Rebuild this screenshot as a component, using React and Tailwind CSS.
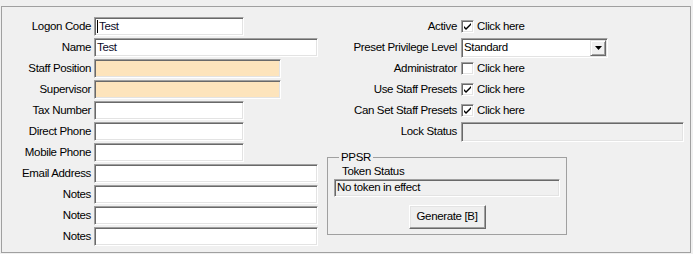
import React from "react";

const sunken =
  "border border-t-[#a0a0a0] border-l-[#a0a0a0] border-b-white border-r-white shadow-[inset_1px_1px_0_#696969,inset_-1px_-1px_0_#e3e3e3]";

const leftRows = [
  { label: "Logon Code", w: "w-[150px]", value: "Test", caret: true },
  { label: "Name", w: "w-[224px]", value: "Test" },
  { label: "Staff Position", w: "w-[187px]", peach: true },
  { label: "Supervisor", w: "w-[187px]", peach: true },
  { label: "Tax Number", w: "w-[150px]" },
  { label: "Direct Phone", w: "w-[150px]" },
  { label: "Mobile Phone", w: "w-[150px]" },
  { label: "Email Address", w: "w-[224px]" },
  { label: "Notes", w: "w-[224px]" },
  { label: "Notes", w: "w-[224px]" },
  { label: "Notes", w: "w-[224px]" },
];

const Check = ({ checked }) => (
  <div className={`w-[13px] h-[13px] bg-white flex items-center justify-center ${sunken}`}>
    {checked && (
      <svg width="9" height="9" viewBox="0 0 9 9">
        <path d="M1 4 L3 6 L8 1 L8 3 L3 8 L1 6 Z" fill="#000" />
      </svg>
    )}
  </div>
);

const RightRow = ({ label, children }) => (
  <div className="h-[21px] flex items-center">
    <div className="w-[137px] text-right whitespace-nowrap">{label}</div>
    <div className="ml-[4px] flex items-center">{children}</div>
  </div>
);

const CheckRow = ({ label, checked }) => (
  <RightRow label={label}>
    <Check checked={checked} />
    <span className="ml-[3px]">Click here</span>
  </RightRow>
);

export default function App() {
  return (
    <div
      className="w-[693px] h-[254px] bg-[#f0f0f0] pt-[6px] pl-[1px] text-[11.5px] tracking-[-0.35px] text-black"
      style={{ fontFamily: '"Liberation Sans", Arial, sans-serif' }}
    >
      <div className="w-[690px] h-[247px] border border-[#a0a0a0] pt-[9px] flex">
        <div className="flex flex-col">
          {leftRows.map((r, i) => (
            <div key={i} className="h-[21px] flex items-center gap-[3px]">
              <div className="w-[89px] text-right whitespace-nowrap">{r.label}</div>
              <div
                className={`h-[19px] ${r.w} ${sunken} ${r.peach ? "bg-[#fde4bc]" : "bg-white"} flex items-center pl-[2px] text-[#0b0b2a]`}
              >
                {r.caret && <span className="inline-block w-px h-[13px] bg-black mr-[1px]" />}
                {r.value}
              </div>
            </div>
          ))}
        </div>

        <div className="ml-[2px] flex flex-col">
          <CheckRow label="Active" checked />
          <RightRow label="Preset Privilege Level">
            <div className={`w-[147px] h-[20px] bg-white flex items-center justify-between pl-[2px] pr-[1px] ${sunken}`}>
              <span>Standard</span>
              <div className="w-[16px] h-[16px] bg-[#f0f0f0] border border-t-[#e3e3e3] border-l-[#e3e3e3] border-b-[#696969] border-r-[#696969] shadow-[inset_1px_1px_0_#fff,inset_-1px_-1px_0_#a0a0a0] flex items-center justify-center">
                <svg width="7" height="4" viewBox="0 0 7 4">
                  <path d="M0 0 H7 L3.5 4 Z" fill="#000" />
                </svg>
              </div>
            </div>
          </RightRow>
          <CheckRow label="Administrator" />
          <CheckRow label="Use Staff Presets" checked />
          <CheckRow label="Can Set Staff Presets" checked />
          <RightRow label="Lock Status">
            <div className={`w-[223px] h-[20px] bg-[#f0f0f0] ${sunken}`} />
          </RightRow>

          <fieldset className="ml-[7px] mt-[9px] w-[240px] border border-[#a0a0a0] px-[6px] pb-[5px]">
            <legend className="ml-[5px] px-[2px] leading-[13px]">PPSR</legend>
            <div className="pl-[8px] h-[14px] leading-[14px]">Token Status</div>
            <div className={`mt-[1px] h-[18px] bg-[#f0f0f0] flex items-center pl-[2px] ${sunken}`}>
              No token in effect
            </div>
            <div className="mt-[8px] flex justify-center">
              <button className="w-[77px] h-[24px] bg-[#efefef] tracking-[-0.35px] border border-t-white border-l-white border-b-[#696969] border-r-[#696969] shadow-[inset_-1px_-1px_0_#a0a0a0,inset_1px_1px_0_#e3e3e3]">
                Generate [B]
              </button>
            </div>
          </fieldset>
        </div>
      </div>
    </div>
  );
}
